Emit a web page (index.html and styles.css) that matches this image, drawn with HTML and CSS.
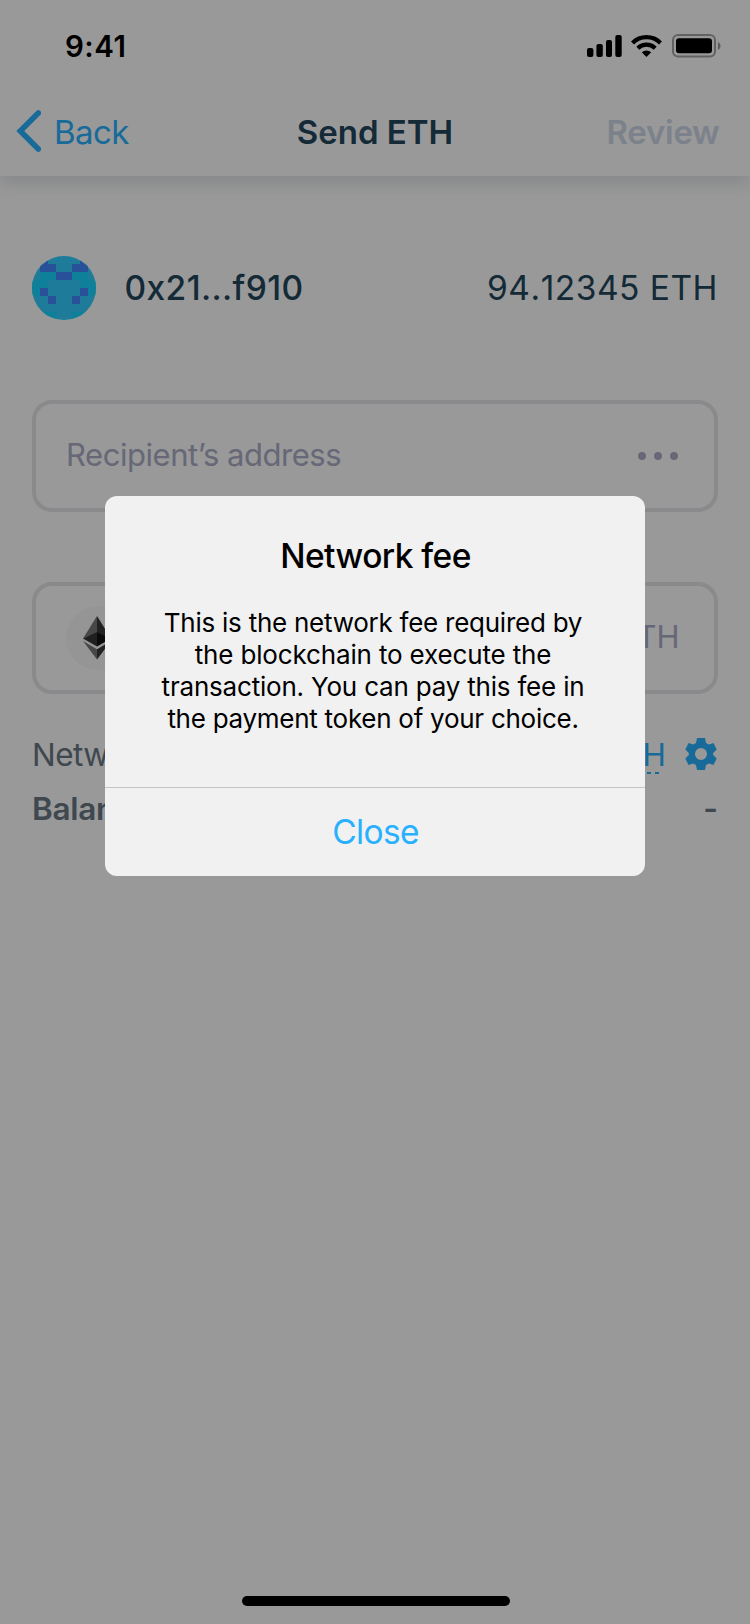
FILE: index.html
```html
<!DOCTYPE html>
<html lang="en">
<head>
<meta charset="utf-8">
<title>Send ETH</title>
<link rel="stylesheet" href="styles.css">
</head>
<body>
<div class="screen">
  <header class="header">
    <div class="status-bar">
      <span class="time">9:41</span>
      <div class="status-icons">
        <svg width="35" height="22" viewBox="0 0 35 22"><rect x="0" y="13" width="6.4" height="9" rx="2"/><rect x="9.4" y="9" width="6.4" height="13" rx="2"/><rect x="19" y="5" width="6" height="17" rx="2"/><rect x="28.3" y="0" width="6.4" height="22" rx="2"/></svg>
        <svg class="wifi" width="31" height="22" viewBox="0 0 31 22"><g fill="none" stroke="#000" stroke-width="4.2"><path d="M1.5 7.9A20 20 0 0 1 29.5 7.9"/><path d="M6.8 13.2A12.6 12.6 0 0 1 24.2 13.2"/></g><path d="M15.5 22L10.8 17.3A7 7 0 0 1 20.2 17.3Z"/></svg>
        <svg class="battery" width="49" height="24" viewBox="0 0 49 24"><rect x="1" y="1" width="42" height="21.6" rx="5" fill="none" stroke="#000" stroke-opacity=".36" stroke-width="2"/><rect x="4" y="4.2" width="36" height="15" rx="3"/><path d="M46 8C49.3 9.5 49.3 14.5 46 16Z" fill-opacity=".4"/></svg>
      </div>
    </div>
    <nav class="nav">
      <div class="back">
        <svg class="chevron" width="25" height="42" viewBox="0 0 25 42"><path d="M22.3 3L4.3 21L22.3 39" fill="none" stroke="#29b1ff" stroke-width="5.6" stroke-linecap="round" stroke-linejoin="miter"/></svg>
        <span class="back-label">Back</span>
      </div>
      <span class="title">Send ETH</span>
      <span class="review">Review</span>
    </nav>
  </header>
  <main class="content">
    <section class="account">
      <svg class="avatar" width="64" height="64" viewBox="0 0 64 64"><defs><clipPath id="round"><circle cx="32" cy="32" r="32"/></clipPath></defs><g clip-path="url(#round)" shape-rendering="crispEdges"><rect width="64" height="64" fill="#33cdff"/><path fill="#18d5ff" d="M0 24H8V16H56V24H64V40H48V24H16V40H0ZM0 56H24V64H0ZM40 56H64V64H40Z"/><path fill="#4488ff" d="M8 0H16V8H24V16H8ZM40 8H48V0H56V16H40ZM24 16H40V24H24ZM8 32H16V40H8ZM48 32H56V40H48ZM16 40H24V48H16ZM40 40H48V48H40Z"/></g></svg>
      <span class="address">0x21...f910</span>
      <span class="amount">94.12345 ETH</span>
    </section>
    <div class="field">
      <span class="placeholder">Recipient’s address</span>
      <span class="dots"><i></i><i></i><i></i></span>
    </div>
    <div class="field field-amount">
      <svg width="64" height="64" viewBox="0 0 64 64"><circle cx="32" cy="32" r="32" fill="#f8f8f8"/><path fill="#777" d="M31 10L17 32.5L31 26.5Z"/><path fill="#393939" d="M31 10L45 32.5L31 26.5Z"/><path fill="#353535" d="M17 32.5L31 26V40.5Z"/><path fill="#111" d="M45 32.5L31 26V40.5Z"/><path fill="#777" d="M17 35L31 43.3V53.5Z"/><path fill="#393939" d="M45 35L31 43.3V53.5Z"/></svg>
      <span class="unit">ETH</span>
    </div>
    <section class="summary">
      <div class="row">
        <span class="fee-label">Network fee</span>
        <span class="fee"><span class="fee-value">0.001 ETH</span><svg class="dash" width="92" height="2" viewBox="0 0 92 2"><path d="M0 1H92" stroke="#29b1ff" stroke-width="2" stroke-dasharray="4 4"/></svg></span>
        <svg class="gear" width="32" height="32" viewBox="0 0 32 32"><path fill="#29b1ff" fill-rule="evenodd" d="M12 0H20L21 5L24 6.6L28.5 5L31.7 11.5L28.2 15V17L31.7 20.5L28.5 27L24 25.4L21 27L20 32H12L11 27L8 25.4L3.5 27L.3 20.5L3.8 17V15L.3 11.5L3.5 5L8 6.6L11 5ZM16 10A6 6 0 1 0 16 22A6 6 0 1 0 16 10Z"/></svg>
      </div>
      <div class="row balance"><span class="balance-label">Balance</span><span class="none">-</span></div>
    </section>
  </main>
  <div class="overlay">
    <div class="modal">
      <h1 class="modal-title"><span>Network fee</span></h1>
      <p class="modal-text"><span class="l1">This is the network fee required by</span><br><span class="l2">the blockchain to execute the</span><br><span class="l3">transaction. You can pay this fee in</span><br><span class="l4">the payment token of your choice.</span></p>
      <div class="modal-action"><span class="close">Close</span></div>
    </div>
  </div>
  <div class="home-indicator"></div>
</div>
</body>
</html>
```

FILE: styles.css
```css
* { box-sizing: border-box; }
body { margin: 0; background: #fff; font-family: Inter, "Liberation Sans", sans-serif; }
svg { display: block; flex: none; }
span { white-space: nowrap; }
.screen { position: relative; width: 750px; height: 1624px; overflow: hidden; }
.header { height: 176px; background: #fff; box-shadow: 0 8px 16px rgba(0, 40, 60, .13); }
.status-bar { display: flex; justify-content: space-between; height: 88px; padding: 34px 29px 0 65px; }
.time { font-size: 29.5px; line-height: 25px; font-weight: 600; letter-spacing: .5px; }
.status-icons { display: flex; align-items: flex-start; padding-top: 1px; }
.wifi { margin-left: 9px; }
.battery { margin: -1px 0 0 10px; }
.nav { display: grid; grid-template-columns: 1fr auto 1fr; align-items: center; height: 88px; padding: 0 16px; font-size: 33px; line-height: 40px; }
.back { display: flex; align-items: center; gap: 13px; color: #29b1ff; }
.chevron { margin-bottom: 2px; }
.back-label { letter-spacing: -.6px; }
.title { font-weight: 600; color: #23465d; }
.review { justify-self: end; margin-right: 14.5px; font-weight: 600; letter-spacing: -.3px; color: #cfd9e8; }
.content { padding: 80px 32px 0; }
.account { display: flex; align-items: center; height: 64px; line-height: 41px; font-size: 33.5px; color: #23465d; }
.address { margin-left: 28.5px; font-weight: 500; letter-spacing: .4px; }
.amount { margin-left: auto; letter-spacing: .5px; font-kerning: none; }
.field { display: flex; align-items: center; justify-content: space-between; height: 112px; margin-top: 80px; padding: 0 36px 0 30px; border: 4px solid #e6e6e9; border-radius: 20px; font-size: 31px; line-height: 38px; color: #aaadc6; }
.placeholder { padding-bottom: 3px; letter-spacing: -.46px; }
.field-amount { margin-top: 70px; }
.unit { margin-right: -1.5px; padding-bottom: 3px; }
.dots { display: flex; gap: 8px; }
.dots i { width: 8px; height: 8px; border-radius: 50%; background: #aaadc6; }
.summary { padding-top: 33px; font-size: 31.5px; color: #697784; }
.row { display: flex; align-items: center; height: 54px; }
.fee-label { letter-spacing: -.5px; }
.balance-label { letter-spacing: -.3px; }
.fee { position: relative; margin-left: auto; color: #29b1ff; }
.dash { position: absolute; right: 7px; bottom: 0; }
.gear { margin: 0 1px 0 19px; }
.balance { justify-content: space-between; font-weight: 600; }
.overlay { position: absolute; inset: 0; background: rgba(0, 0, 0, .4); }
.modal { position: absolute; left: 105px; top: 496px; width: 540px; height: 380px; border-radius: 12px; background: #f1f1f1; overflow: hidden; text-align: center; color: #000; }
.modal-title { margin: 40px 0 0; padding-left: 1px; font-size: 33.5px; line-height: 41px; font-weight: 500; letter-spacing: -.55px; }
.modal-text { margin: 30px 0 0; padding-right: 4px; font-size: 26px; line-height: 32px; }
.l1 { letter-spacing: -.25px; }
.l2 { letter-spacing: -.15px; }
.l3 { letter-spacing: -.2px; }
.l4 { letter-spacing: -.27px; }
.modal-action { height: 89px; margin-top: 52px; padding-left: 1px; border-top: 1px solid #c3c5c6; font-size: 33.5px; line-height: 88px; letter-spacing: -.65px; color: #29b1ff; }
.home-indicator { position: absolute; left: 242px; top: 1596px; width: 268px; height: 10px; border-radius: 5px; background: #000; }
```
